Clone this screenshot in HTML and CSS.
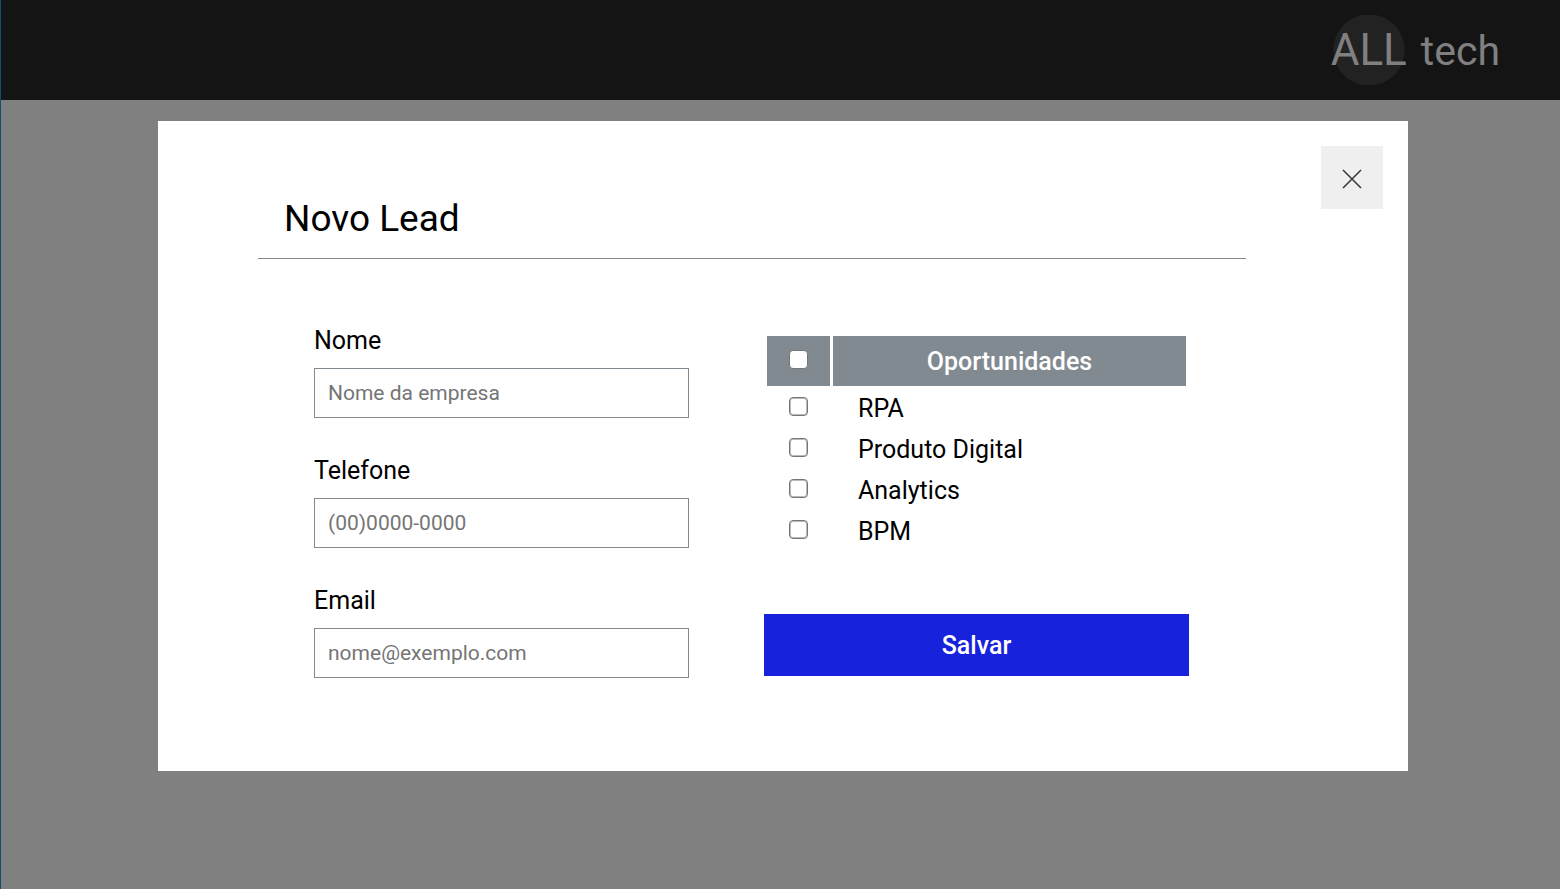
FILE: index.html
```html
<!DOCTYPE html>
<html lang="pt-BR">
<head>
  <meta charset="utf-8">
  <meta name="viewport" content="width=device-width, initial-scale=1">
  <title>Novo Lead</title>
  <link rel="stylesheet" href="styles.css">
</head>
<body>
  <div class="page">
    <header class="topbar">
      <div class="brand"><span class="brand-mark">ALL</span><span>tech</span></div>
    </header>
    <main class="stage">
      <section class="modal" role="dialog" aria-labelledby="modal-title">
        <div class="content">
          <h1 class="title" id="modal-title">Novo Lead</h1>
          <form class="form">
            <div class="fields">
              <div class="field">
                <label for="nome">Nome</label>
                <input class="textbox" id="nome" type="text" placeholder="Nome da empresa">
              </div>
              <div class="field">
                <label for="telefone">Telefone</label>
                <input class="textbox" id="telefone" type="tel" placeholder="(00)0000-0000">
              </div>
              <div class="field">
                <label for="email">Email</label>
                <input class="textbox" id="email" type="email" placeholder="nome@exemplo.com">
              </div>
            </div>
            <div class="options">
              <table class="table">
                <thead>
                  <tr>
                    <th class="pick"><input class="check" type="checkbox" aria-label="Selecionar todas"></th>
                    <th>Oportunidades</th>
                  </tr>
                </thead>
                <tbody>
                  <tr><td class="pick"><input class="check" type="checkbox" id="rpa"></td><td><label for="rpa">RPA</label></td></tr>
                  <tr><td class="pick"><input class="check" type="checkbox" id="produto"></td><td><label for="produto">Produto Digital</label></td></tr>
                  <tr><td class="pick"><input class="check" type="checkbox" id="analytics"></td><td><label for="analytics">Analytics</label></td></tr>
                  <tr><td class="pick"><input class="check" type="checkbox" id="bpm"></td><td><label for="bpm">BPM</label></td></tr>
                </tbody>
              </table>
              <button class="save" type="submit">Salvar</button>
            </div>
          </form>
        </div>
        <button class="close" type="button" aria-label="Fechar">
          <svg width="20" height="20" viewBox="0 0 20 20" fill="none" stroke="#333" stroke-width="1.5"><path d="M1 1l18 18M19 1l-18 18"/></svg>
        </button>
      </section>
    </main>
  </div>
</body>
</html>
```
FILE: styles.css
```css
* {
  box-sizing: border-box;
}

body {
  margin: 0;
  background: #808080;
  color: #000;
  font-family: Roboto, "Liberation Sans", sans-serif;
  font-size: 25px;
  line-height: 30px;
}

.page {
  min-height: 100vh;
  border-left: 1px solid #10506e;
}

.topbar {
  display: flex;
  justify-content: flex-end;
  align-items: center;
  height: 100px;
  padding: 0 60px;
  background: #141414;
  color: #808080;
  font-size: 41px;
  line-height: 70px;
}

.brand {
  display: flex;
  align-items: baseline;
  gap: 14px;
}

.brand-mark {
  background: radial-gradient(circle, #222 35px, transparent 36px) center / 72px 70px no-repeat;
  font-size: 44px;
}

.stage {
  display: flex;
  justify-content: center;
  padding: 21px 0 21px 5px;
}

.modal {
  display: grid;
  grid-template-columns: 1fr 62px;
  gap: 75px;
  align-items: start;
  width: 100%;
  max-width: 1250px;
  padding: 25px 25px 93px 100px;
  background: #fff;
}

.title {
  margin: 0;
  padding: 51px 26px 17px;
  border-bottom: 1px solid #828a91;
  font-size: 37px;
  font-weight: 400;
  line-height: 44px;
}

.form {
  display: grid;
  grid-template-columns: 375fr 425fr;
  gap: 75px;
  padding: 67px 57px 0 56px;
}

.fields {
  display: grid;
  gap: 38px;
}

.field {
  display: grid;
  gap: 12px;
}

.textbox {
  width: 100%;
  height: 50px;
  padding: 0 13px;
  border: 1px solid #828a91;
  background: #fff;
  font: inherit;
  font-size: 21px;
}

.textbox::placeholder {
  color: #757575;
}

.options {
  display: grid;
  gap: 61px;
  align-content: start;
  padding-top: 7px;
}

.table {
  width: 100%;
  border-spacing: 3px;
  table-layout: fixed;
}

.table th {
  height: 50px;
  padding: 2px 0 0;
  background: #828a91;
  color: #fff;
  font-weight: 500;
}

.table td {
  height: 38px;
  padding: 2px 25px 0;
}

.table .pick {
  width: 63px;
  padding: 0 0 4px;
  text-align: center;
}

.check {
  appearance: none;
  display: block;
  width: 19px;
  height: 19px;
  margin: 0 auto;
  border: 1px solid #767676;
  border-radius: 4px;
  background: #fff;
  box-shadow: inset 0 0 0 1px #bbb;
}

.table th .check {
  box-shadow: none;
}

.check:checked {
  background: #1821dc;
}

.save {
  height: 62px;
  padding: 2px 0 0;
  border: 0;
  background: #1821dc;
  color: #fff;
  font: inherit;
  font-weight: 500;
}

.close {
  display: grid;
  place-items: center;
  height: 63px;
  padding: 3px 0 0;
  border: 0;
  background: #efefef;
}
```
